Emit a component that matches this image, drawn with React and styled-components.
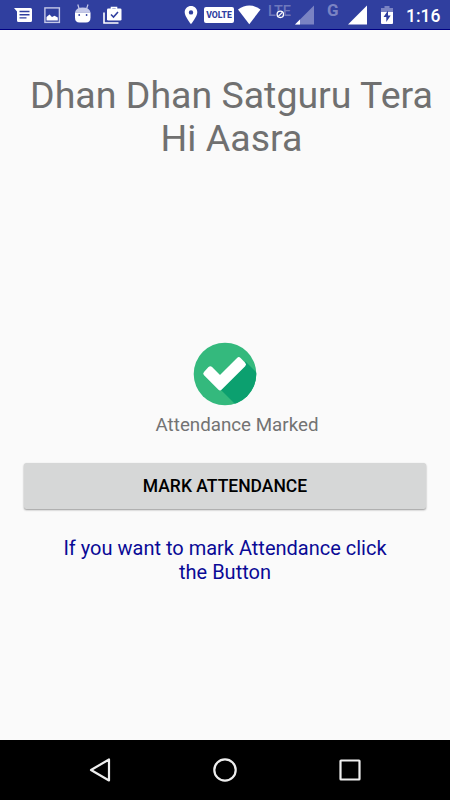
import React from "react";
import styled, { createGlobalStyle } from "styled-components";

function StatusBar() {
  return (
    <Status>
      <StatusIcon $gap={14} width="19" height="30" viewBox="0 0 19 30">
        <path
          fill="#fff"
          fillRule="evenodd"
          d="M0 8H16.5Q18 8 18 9.500V20.500Q18 22 16.500 22H4.500Q3 22 3 20.500V11.500ZM5.500 10.800V12.200H15.500V10.800ZM5.500 14V15.400H15.500V14ZM5.500 17.200V18.600H12.500V17.200Z"
        />
      </StatusIcon>
      <StatusIcon $gap={11} width="17" height="30" viewBox="0 0 17 30">
        <rect
          x="0.900"
          y="7.900"
          width="14.500"
          height="14.500"
          fill="none"
          stroke="#c5c9e8"
          strokeWidth="1.400"
        />
        <path
          fill="#fff"
          d="M2.500 20.500V17L5.500 14.500L8 17L10.500 15.700L13.800 17.500V20.500Z"
        />
      </StatusIcon>
      <StatusIcon $gap={14} width="16" height="30" viewBox="0 0 16 30">
        <path stroke="#c5c9e8" strokeWidth="1.200" d="M2.800 4.500L4.200 9M13 4.500L11.500 9" />
        <path fill="#c5c9e8" d="M0 12.500Q1 7.500 7.700 7.500Q14.500 7.500 15.500 12.500Z" />
        <path
          fill="#fff"
          d="M0 12.500H15.500V17.500Q15.500 22.500 11 22.500H4.500Q0 22.500 0 17.500Z"
        />
        <circle cx="4.200" cy="15" r="0.900" fill="#303f9f" />
        <circle cx="11.600" cy="15" r="0.900" fill="#303f9f" />
      </StatusIcon>
      <StatusIcon $gap={12} width="20" height="30" viewBox="0 0 20 30">
        <path
          fill="none"
          stroke="#fff"
          strokeWidth="1.600"
          d="M1 12.500V23H15.500M8.500 9.500V7.500H13.500V9.500"
        />
        <rect x="4" y="8.500" width="14.500" height="12" rx="1.300" fill="#fff" />
        <path
          fill="none"
          stroke="#303f9f"
          strokeWidth="1.600"
          d="M8 14.500L10.500 17L15 12"
        />
      </StatusIcon>
      <StatusIcon $gap={61} width="14" height="30" viewBox="0 0 14 30">
        <path
          fill="#fff"
          fillRule="evenodd"
          d="M7 6C3.500 6 0.700 8.700 0.700 12.300C0.700 16.500 7 24.200 7 24.200S13.300 16.500 13.300 12.300C13.300 8.700 10.500 6 7 6ZM7 10.200A2.200 2.200 0 1 1 7 14.600A2.200 2.200 0 0 1 7 10.200Z"
        />
      </StatusIcon>
      <Volte>VOLTE</Volte>
      <StatusIcon $gap={4} width="23" height="30" viewBox="0 0 23 30">
        <path fill="#fff" d="M0 9.500Q11.200 1.500 22.500 9.500L11.300 24.200Z" />
      </StatusIcon>
      <StatusIcon $gap={7} width="23" height="30" viewBox="0 0 23 30">
        <LteText x="0" y="16" textLength="23" lengthAdjust="spacingAndGlyphs">
          LTE
        </LteText>
        <circle cx="12.300" cy="14.300" r="4.200" fill="#303f9f" />
        <circle
          cx="12.300"
          cy="14.300"
          r="3.200"
          fill="none"
          stroke="#fff"
          strokeWidth="1.300"
        />
        <path stroke="#fff" strokeWidth="1.200" d="M10.300 16.300L14.300 12.300" />
      </StatusIcon>
      <StatusIcon $gap={4} width="19" height="30" viewBox="0 0 19 30">
        <path fill="#7a83c3" d="M0 24.500L19 5.500V24.500Z" />
        <path fill="#fff" d="M0 24.500L5 19.500V24.500Z" />
      </StatusIcon>
      <Network>G</Network>
      <StatusIcon $gap={9} width="19" height="30" viewBox="0 0 19 30">
        <path fill="#fff" d="M0 24.500L19 5.500V24.500Z" />
      </StatusIcon>
      <StatusIcon $gap={14} width="12" height="30" viewBox="0 0 12 30">
        <path fill="#7a83c3" d="M3.500 6H8.500V8H12V12H0V8H3.500Z" />
        <path fill="#fff" d="M0 12H12V23Q12 24 11 24H1Q0 24 0 23Z" />
        <path fill="#303f9f" d="M7 10.500L2.500 17H5.300V22L9.700 15.500H7Z" />
      </StatusIcon>
      <Clock>1:16</Clock>
    </Status>
  );
}

function CheckBadge() {
  return (
    <Badge viewBox="0 0 64 64">
      <defs>
        <clipPath id="disc">
          <circle cx="32" cy="32" r="31.300" />
        </clipPath>
      </defs>
      <g clipPath="url(#disc)">
        <rect width="64" height="64" fill="#34b97d" />
        <path fill="#0ca06f" d="M52.500 19.500L72 39V72H52L27.500 47.500Z" />
      </g>
      <path
        fill="#fff"
        stroke="#fff"
        strokeWidth="5"
        strokeLinejoin="round"
        d="M17.300 26.800L12.800 31.600L27 45.800L50.400 22.400L45.800 17.700L27 36.500Z"
      />
    </Badge>
  );
}

function App() {
  return (
    <Screen>
      <GlobalStyle />
      <StatusBar />
      <Content>
        <Title>Dhan Dhan Satguru Tera Hi Aasra</Title>
        <Result>
          <CheckBadge />
          <ResultText>Attendance Marked</ResultText>
        </Result>
        <MarkButton>MARK ATTENDANCE</MarkButton>
        <Hint>If you want to mark Attendance click the Button</Hint>
      </Content>
      <NavBar>
        <NavIcon viewBox="0 0 26 26">
          <path d="M22 2.500V23.500L4 13Z" />
        </NavIcon>
        <NavIcon viewBox="0 0 26 26">
          <circle cx="13" cy="13" r="10.700" />
        </NavIcon>
        <NavIcon viewBox="0 0 26 26">
          <rect x="3.500" y="3.500" width="19" height="19" rx="0.500" />
        </NavIcon>
      </NavBar>
    </Screen>
  );
}

export default App;

const GlobalStyle = createGlobalStyle`
  body {
    margin: 0;
    font-family: Roboto, sans-serif;
  }
`;

const Screen = styled.div`
  display: flex;
  flex-direction: column;
  width: 450px;
  height: 800px;
  overflow: hidden;
  background: #fafafa;
`;

const Status = styled.div`
  display: flex;
  box-sizing: border-box;
  height: 30px;
  background: #303f9f;
  border-bottom: 1px solid #000082;
`;

const StatusIcon = styled.svg`
  flex: none;
  margin-left: ${(props) => props.$gap}px;
`;

const LteText = styled.text`
  fill: #6e78bc;
  font-size: 14px;
  font-weight: 500;
`;

const Volte = styled.div`
  width: 30px;
  height: 16px;
  margin: 7px 0 0 6px;
  border-radius: 2px;
  background: #fff;
  color: #303f9f;
  font-size: 8.7px;
  font-weight: 800;
  line-height: 16px;
  text-align: center;
`;

const Network = styled.div`
  width: 12px;
  margin: 0 0 0 13px;
  color: #7a83c3;
  font-size: 17px;
  font-weight: 700;
  line-height: 20px;
`;

const Clock = styled.div`
  margin-left: 13px;
  color: #fff;
  font-size: 17.5px;
  font-weight: 500;
  line-height: 32px;
`;

const Content = styled.div`
  display: flex;
  flex: 1;
  flex-direction: column;
  align-items: center;
`;

const Title = styled.h1`
  width: 412px;
  height: 87px;
  margin: 44px 0 0 13px;
  color: #707070;
  font-size: 37.5px;
  font-weight: 400;
  line-height: 43px;
  text-align: center;
`;

const Result = styled.div`
  display: flex;
  flex-direction: column;
  align-items: center;
  margin-top: 181px;
`;

const Badge = styled.svg`
  width: 64px;
  height: 64px;
`;

const ResultText = styled.p`
  margin: 8px 0 0 24px;
  color: #737373;
  font-size: 18.75px;
  line-height: 22px;
`;

const MarkButton = styled.button`
  width: 402px;
  height: 46px;
  margin-top: 27px;
  padding: 0;
  border: 0;
  border-radius: 2.5px;
  background: #d6d7d7;
  box-shadow: 0 1px 2px rgba(0, 0, 0, 0.4);
  color: #000;
  font-family: inherit;
  font-size: 17.5px;
  font-weight: 500;
`;

const Hint = styled.p`
  width: 350px;
  margin: 27px 0 0;
  color: #0a0a96;
  font-size: 20px;
  line-height: 24px;
  text-align: center;
`;

const NavBar = styled.div`
  display: flex;
  align-items: center;
  justify-content: center;
  gap: 99px;
  height: 60px;
  background: #000;
`;

const NavIcon = styled.svg`
  width: 26px;
  height: 26px;
  fill: none;
  stroke: #eee;
  stroke-width: 2.2;
  stroke-linejoin: round;
`;
